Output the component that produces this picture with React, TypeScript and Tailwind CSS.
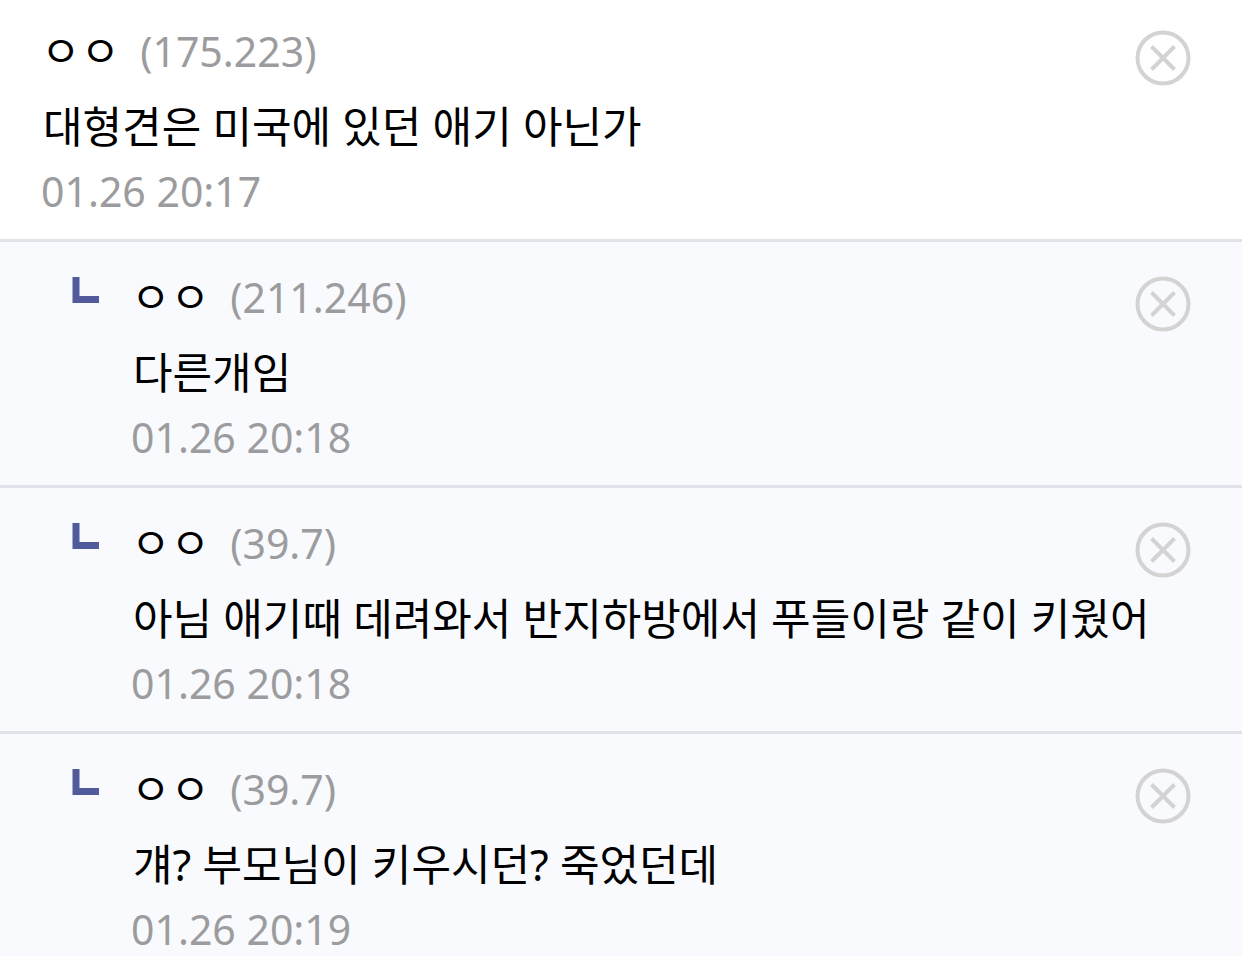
type Comment = {
  id: number;
  name: string;
  ip: string;
  text: string;
  date: string;
  reply?: boolean;
};

const comments: Comment[] = [
  { id: 1, name: "ㅇㅇ", ip: "175.223", text: "대형견은 미국에 있던 애기 아닌가", date: "01.26 20:17" },
  { id: 2, name: "ㅇㅇ", ip: "211.246", text: "다른개임", date: "01.26 20:18", reply: true },
  { id: 3, name: "ㅇㅇ", ip: "39.7", text: "아님 애기때 데려와서 반지하방에서 푸들이랑 같이 키웠어", date: "01.26 20:18", reply: true },
  { id: 4, name: "ㅇㅇ", ip: "39.7", text: "걔? 부모님이 키우시던? 죽었던데", date: "01.26 20:19", reply: true },
];

function ReplyMark() {
  return (
    <svg viewBox="0 0 28 28" className="mt-3 h-7 w-7 shrink-0" aria-hidden="true">
      <path d="M5 0V22.500H28" fill="none" stroke="#515b9c" strokeWidth="7" />
    </svg>
  );
}

function DeleteButton() {
  return (
    <button type="button" aria-label="삭제" className="mt-[11px] h-14 w-14 shrink-0">
      <svg viewBox="0 0 56 56" className="h-14 w-14" fill="none" stroke="#d3d3d3">
        <circle cx="28" cy="28" r="25.500" strokeWidth="4" />
        <path d="M16.500 16.500L39.500 39.500M39.500 16.500L16.500 39.500" strokeWidth="4" />
      </svg>
    </button>
  );
}

function CommentRow({ comment }: { comment: Comment }) {
  return (
    <li
      className={`flex border-b-3 border-[#e1e2ea] pr-[51px] pb-6 last:border-b-0 last:pb-0 ${
        comment.reply ? "bg-[#f9fafd] pt-[23px] pl-[71px]" : "bg-white pt-[19px] pl-[41px]"
      }`}
    >
      {comment.reply && <ReplyMark />}
      <div className={`min-w-0 flex-1 ${comment.reply ? "ml-8" : ""}`}>
        <div className="flex min-h-[68px] items-start justify-between">
          <div className="flex items-baseline gap-5 leading-[64px]">
            <span className="text-[43px] text-black">{comment.name}</span>
            <span className="text-[41px] text-[#9c9c9e]">({comment.ip})</span>
          </div>
          <DeleteButton />
        </div>
        <p className="-mr-10 pl-0.5 text-[43px] leading-[80px] text-black">{comment.text}</p>
        <time className="block text-[41px] leading-[48px] text-[#9c9c9e]">{comment.date}</time>
      </div>
    </li>
  );
}

export default function App() {
  return (
    <ul className="min-h-screen bg-[#f9fafd] font-['Noto_Sans','Noto_Sans_CJK_KR',sans-serif]">
      {comments.map((comment) => (
        <CommentRow key={comment.id} comment={comment} />
      ))}
    </ul>
  );
}
